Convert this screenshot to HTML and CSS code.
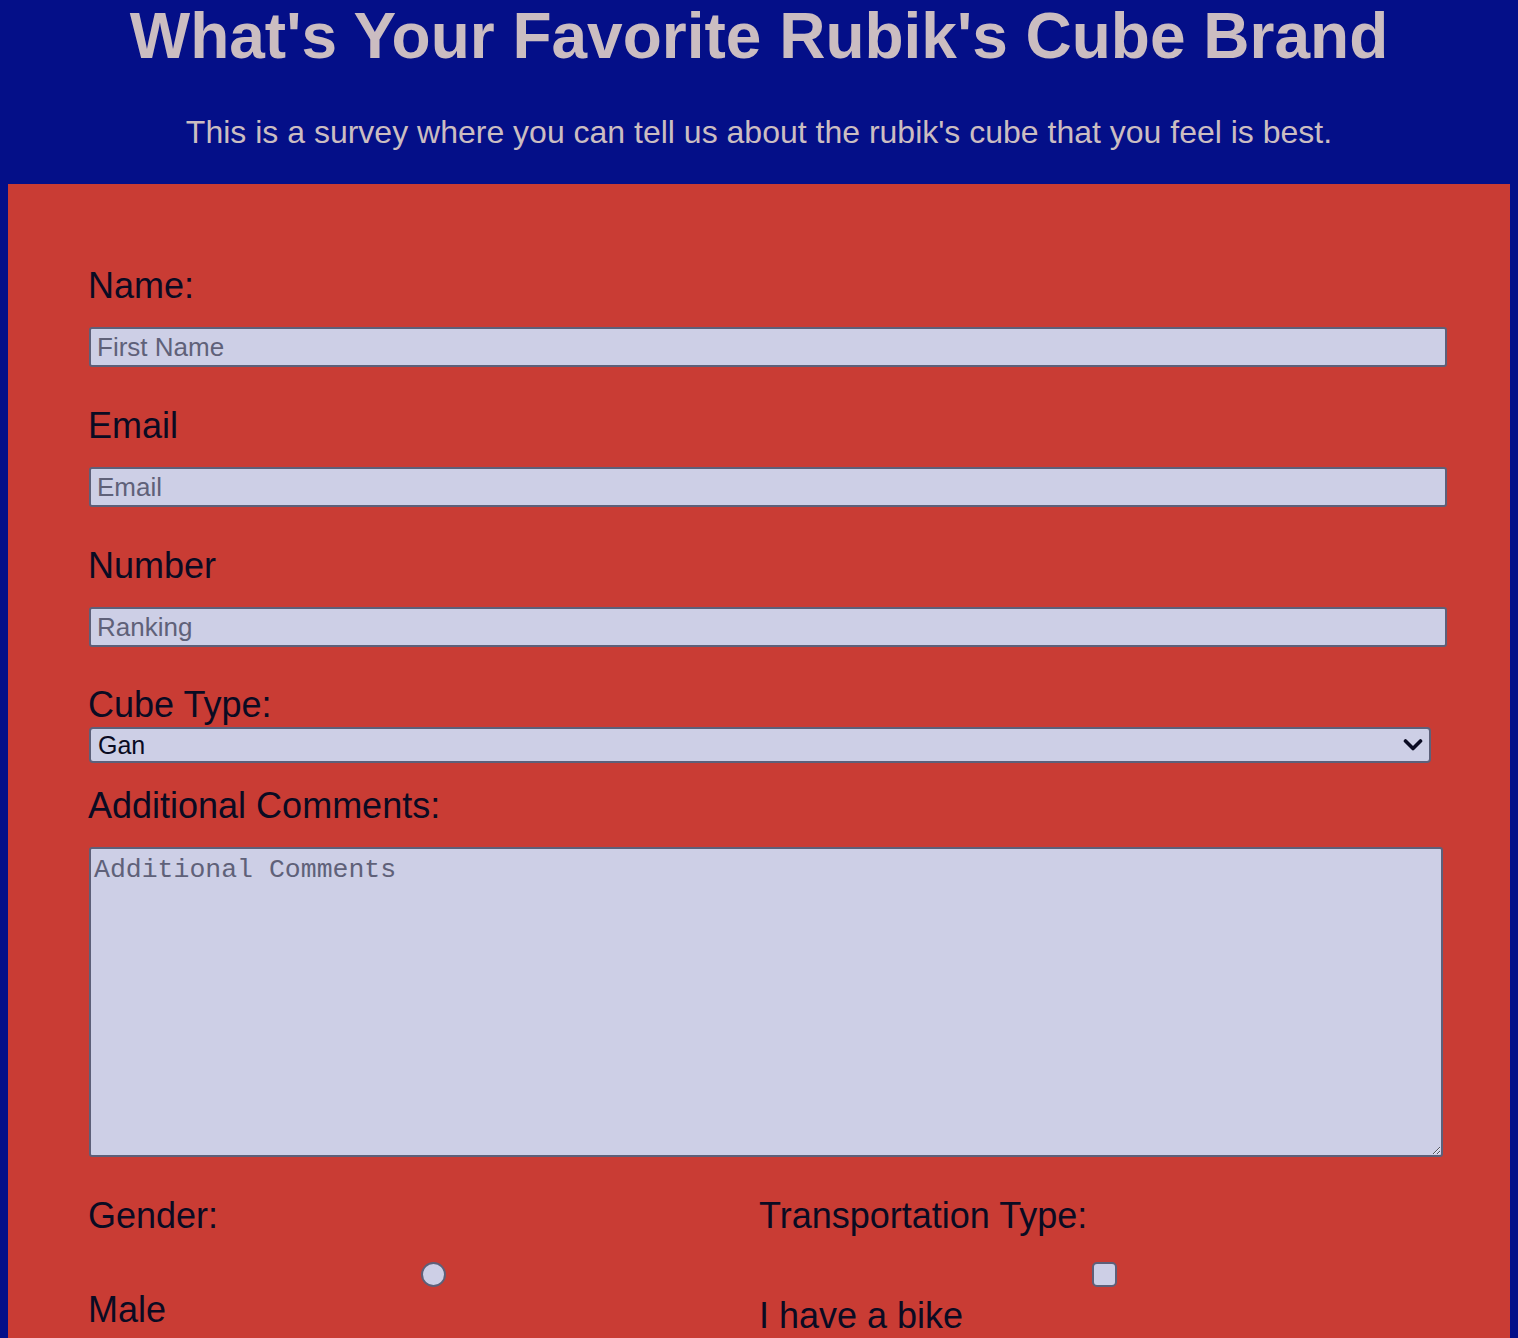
FILE: index.html
```html
<!DOCTYPE html>
<html lang="en">
<head>
<meta charset="utf-8">
<title>Rubik's Cube Survey</title>
<link rel="stylesheet" href="styles.css">
</head>
<body>
<header class="header">
  <h1 class="title" id="title">What's Your Favorite Rubik's Cube Brand</h1>
  <p class="description" id="description">This is a survey where you can tell us about the rubik's cube that you feel is best.</p>
</header>
<form class="survey" id="survey-form">
  <div class="group">
    <label class="label" for="name" id="name-label">Name:</label>
    <input class="field" type="text" id="name" placeholder="First Name">
  </div>
  <div class="group">
    <label class="label" for="email" id="email-label">Email</label>
    <input class="field" type="email" id="email" placeholder="Email">
  </div>
  <div class="group">
    <label class="label" for="number" id="number-label">Number</label>
    <input class="field" type="number" id="number" placeholder="Ranking">
  </div>
  <div class="group group-select">
    <label class="label" for="dropdown">Cube Type:</label>
    <div class="select-wrap">
      <select class="select" id="dropdown">
        <option>Gan</option>
        <option>MoYu</option>
        <option>QiYi</option>
      </select>
      <svg class="chevron" width="20" height="14" viewBox="0 0 20 14" aria-hidden="true">
        <path d="M2.5 3 L10 10.5 L17.5 3" fill="none" stroke="#0a0b22" stroke-width="3.6" stroke-linecap="round" stroke-linejoin="round"/>
      </svg>
    </div>
  </div>
  <div class="group group-comments">
    <label class="label" for="comments">Additional Comments:</label>
    <textarea class="comments" id="comments" placeholder="Additional Comments"></textarea>
  </div>
  <div class="choices">
    <div class="choice-col">
      <p class="label choice-title">Gender:</p>
      <input class="radio" type="radio" name="gender" id="male" value="male">
      <label class="label choice-label" for="male">Male</label>
    </div>
    <div class="choice-col">
      <p class="label choice-title">Transportation Type:</p>
      <input class="checkbox" type="checkbox" id="bike" value="bike">
      <label class="label choice-label choice-label-bike" for="bike">I have a bike</label>
    </div>
  </div>
</form>
</body>
</html>
```
FILE: styles.css
```css
html {
  background: #040f88;
}
body {
  margin: 0 8px 8px;
  background: #040f88;
  font-family: "Liberation Sans", Arial, Helvetica, sans-serif;
  color: #0a0b22;
}
.header {
  padding-top: 4px;
  text-align: center;
  color: #cbbdc1;
}
.title {
  margin: 0;
  font-size: 64px;
  line-height: 64px;
  font-weight: bold;
}
.description {
  margin: 46px 0 33px;
  font-size: 32px;
  line-height: 37px;
}
.survey {
  background: #c93c34;
  padding: 81px 63px 60px 81px;
}
.label {
  display: block;
  margin: 0;
  font-size: 36px;
  line-height: 41px;
  color: #0a0b22;
}
.group .label,
.choice-title {
  text-indent: -1px;
}
.group + .group {
  margin-top: 38px;
}
.group .label {
  margin-bottom: 21px;
}
.field {
  display: block;
  box-sizing: border-box;
  width: 100%;
  height: 40px;
  margin: 0;
  padding: 0 6px;
  border: 2px solid #5d6079;
  border-radius: 3px;
  background: #cdcfe6;
  font-family: "Liberation Sans", Arial, sans-serif;
  font-size: 26px;
  color: #0a0b22;
  -moz-appearance: textfield;
}
.field::-webkit-outer-spin-button,
.field::-webkit-inner-spin-button {
  -webkit-appearance: none;
  margin: 0;
}
.field::placeholder,
.comments::placeholder {
  color: #5f6179;
  opacity: 1;
}
.group-select {
  margin-top: 37px !important;
}
.group-select .label {
  margin-bottom: 2px;
}
.select-wrap {
  position: relative;
  width: 1342px;
}
.select {
  display: block;
  box-sizing: border-box;
  width: 1342px;
  height: 36px;
  margin: 0;
  padding: 0 7px;
  border: 2px solid #5d6079;
  border-radius: 4px;
  background: #cdcfe6;
  font-family: "Liberation Sans", Arial, sans-serif;
  font-size: 25px;
  color: #0a0b22;
  -webkit-appearance: none;
  appearance: none;
}
.chevron {
  position: absolute;
  right: 8px;
  top: 11px;
  pointer-events: none;
}
.group-comments {
  margin-top: 22px !important;
}
.comments {
  display: block;
  box-sizing: border-box;
  width: 1354px;
  height: 310px;
  margin: 0;
  padding: 6px 3px 2px;
  border: 2px solid #5d6079;
  border-radius: 3px;
  background: #cdcfe6;
  font-family: "Liberation Mono", "Courier New", monospace;
  font-size: 26.5px;
  color: #0a0b22;
}
.choices {
  display: grid;
  grid-template-columns: 671px 1fr;
  margin-top: 38px;
}
.choice-title {
  margin-bottom: 26px;
}
.radio,
.checkbox {
  display: block;
  box-sizing: border-box;
  width: 25px;
  height: 25px;
  margin: 0 0 0 332px;
  border: 2.5px solid #5d6079;
  background: #cdcfe6;
  -webkit-appearance: none;
  appearance: none;
}
.radio {
  border-radius: 50%;
}
.checkbox {
  border-radius: 5px;
}
.choice-label {
  margin-top: 2px;
  text-indent: -1px;
}
.choice-label-bike {
  margin-top: 8px;
}
```
